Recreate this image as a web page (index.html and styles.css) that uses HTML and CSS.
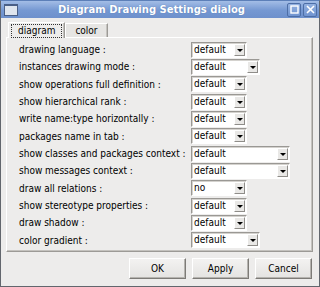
FILE: index.html
```html
<!DOCTYPE html>
<html lang="en">
<head>
  <meta charset="UTF-8" />
  <title>Diagram Drawing Settings dialog</title>
  <link rel="stylesheet" href="styles.css">
</head>
<body>
  <div class="window">
    <!-- Title bar -->
    <div class="titlebar">
      <span class="win-icon"></span>
      <span class="title">Diagram Drawing Settings dialog</span>
      <span class="tb-btn">
        <svg width="9" height="9" viewBox="0 0 9 9"><rect x="1" y="1" width="7" height="7" fill="none" stroke="#fff" stroke-width="1.4"/></svg>
      </span>
      <span class="tb-btn">
        <svg width="9" height="9" viewBox="0 0 9 9"><path d="M1 1 L8 8 M8 1 L1 8" stroke="#fff" stroke-width="1.6"/></svg>
      </span>
    </div>

    <div class="body">
      <!-- Tabs -->
      <div class="tabs">
        <div class="tab active"><span class="focus">diagram</span></div>
        <div class="tab">color</div>
      </div>

      <!-- Settings pane -->
      <div class="pane">
        <div class="row"><span class="label">drawing language :</span><span class="combo small"><span class="value">default</span><span class="arrow"></span></span></div>
        <div class="row"><span class="label">instances drawing mode :</span><span class="combo medium"><span class="value">default</span><span class="arrow"></span></span></div>
        <div class="row"><span class="label">show operations full definition :</span><span class="combo small"><span class="value">default</span><span class="arrow"></span></span></div>
        <div class="row"><span class="label">show hierarchical rank :</span><span class="combo small"><span class="value">default</span><span class="arrow"></span></span></div>
        <div class="row"><span class="label">write name:type horizontally :</span><span class="combo small"><span class="value">default</span><span class="arrow"></span></span></div>
        <div class="row"><span class="label">packages name in tab :</span><span class="combo small"><span class="value">default</span><span class="arrow"></span></span></div>
        <div class="row"><span class="label">show classes and packages context :</span><span class="combo large"><span class="value">default</span><span class="arrow"></span></span></div>
        <div class="row"><span class="label">show messages context :</span><span class="combo large"><span class="value">default</span><span class="arrow"></span></span></div>
        <div class="row"><span class="label">draw all relations :</span><span class="combo small"><span class="value">no</span><span class="arrow"></span></span></div>
        <div class="row"><span class="label">show stereotype properties :</span><span class="combo small"><span class="value">default</span><span class="arrow"></span></span></div>
        <div class="row"><span class="label">draw shadow :</span><span class="combo small"><span class="value">default</span><span class="arrow"></span></span></div>
        <div class="row"><span class="label">color gradient :</span><span class="combo medium"><span class="value">default</span><span class="arrow"></span></span></div>
      </div>

      <!-- Dialog buttons -->
      <div class="actions">
        <button>OK</button>
        <button>Apply</button>
        <button>Cancel</button>
      </div>
    </div>
  </div>
</body>
</html>
```

FILE: styles.css
```css
/* Page */
html, body {
  margin: 0;
  padding: 0;
  background: #edeceb;
}

body {
  font-family: "DejaVu Sans Condensed", "DejaVu Sans", sans-serif;
  font-size: 10px;
  color: #000;
}

/* Window frame */
.window {
  width: 320px;
  height: 287px;
  box-sizing: border-box;
  border: 1px solid #62666d;
  border-top-color: #5c7fb8;
  background: #edeceb;
  display: flex;
  flex-direction: column;
}

/* Title bar */
.titlebar {
  height: 17px;
  display: flex;
  align-items: center;
  padding: 0 2px 0 2px;
  background: linear-gradient(#a3bde6, #7598d2 55%, #6d90cc);
}

.win-icon {
  width: 12px;
  height: 9px;
  margin-left: 1px;
  border: 1px solid #4a5f86;
  border-top-width: 2px;
  background: #dfe5ee;
}

.title {
  flex: 1;
  text-align: center;
  font-family: "DejaVu Sans", sans-serif;
  font-weight: bold;
  font-size: 10px;
  color: #fff;
  text-shadow: 0 0 1px #4c6ea8;
}

.tb-btn {
  width: 12px;
  height: 12px;
  margin-left: 2px;
  border: 1px solid #4d6ea6;
  border-radius: 2px;
  background: linear-gradient(#93b1e0, #7094d0);
  display: flex;
  align-items: center;
  justify-content: center;
}

/* Dialog body */
.body {
  flex: 1;
  padding: 0 6px 0 5px;
  display: flex;
  flex-direction: column;
}

/* Tabs */
.tabs {
  height: 15px;
  margin-top: 4px;
  padding-left: 2px;
  display: flex;
  align-items: flex-end;
  position: relative;
  z-index: 1;
}

.tab {
  height: 13px;
  padding: 0 9px;
  border: 1px solid #9c9a96;
  border-bottom: none;
  border-left-color: #fff;
  border-top-color: #fff;
  box-shadow: inset -1px 0 0 #c4c2be;
  background: #e6e5e3;
  line-height: 13px;
}

.tab.active {
  height: 15px;
  margin-bottom: -1px;
  padding: 0 2px;
  background: #edeceb;
  line-height: 15px;
}

.focus {
  display: block;
  height: 12px;
  margin-top: 1px;
  padding: 0 6px;
  border: 1px dotted #333;
  line-height: 12px;
}

/* Pane with the settings rows */
.pane {
  height: 215px;
  box-sizing: border-box;
  padding: 3px 0 4px 12px;
  border: 1px solid #9c9a96;
  border-left-color: #fff;
  border-top-color: #fff;
  box-shadow: inset -1px -1px 0 #c4c2be;
  display: grid;
  grid-auto-rows: 17.33px;
}

.row {
  display: flex;
  align-items: center;
}

.label {
  width: 172px;
}

/* Combo boxes */
.combo {
  height: 16px;
  box-sizing: border-box;
  border: 1px solid;
  border-color: #9a9894 #fff #fff #9a9894;
  background: #fff;
  box-shadow: inset 1px 1px 0 #d4d2ce;
  display: flex;
  align-items: center;
  padding: 1px 1px 1px 2px;
}

.combo.small { width: 56px; }
.combo.medium { width: 69px; }
.combo.large { width: 99px; }

.value {
  flex: 1;
  line-height: 12px;
}

.arrow {
  width: 11px;
  height: 12px;
  box-sizing: border-box;
  border: 1px solid;
  border-color: #fff #8f8d89 #8f8d89 #fff;
  background: #e9e8e6;
  position: relative;
}

.arrow::after {
  content: "";
  position: absolute;
  left: 2px;
  top: 4px;
  border-left: 3px solid transparent;
  border-right: 3px solid transparent;
  border-top: 3px solid #000;
}

/* Buttons */
.actions {
  margin-top: 6px;
  padding-right: 1px;
  display: flex;
  justify-content: flex-end;
  gap: 6px;
}

.actions button {
  width: 57px;
  height: 21px;
  padding: 0;
  font-family: inherit;
  font-size: 10px;
  color: #000;
  border: 1px solid;
  border-color: #fff #7d7b77 #7d7b77 #fff;
  box-shadow: inset -1px -1px 0 #b5b3af;
  background: linear-gradient(#f3f2f1, #e4e3e1);
}
```
